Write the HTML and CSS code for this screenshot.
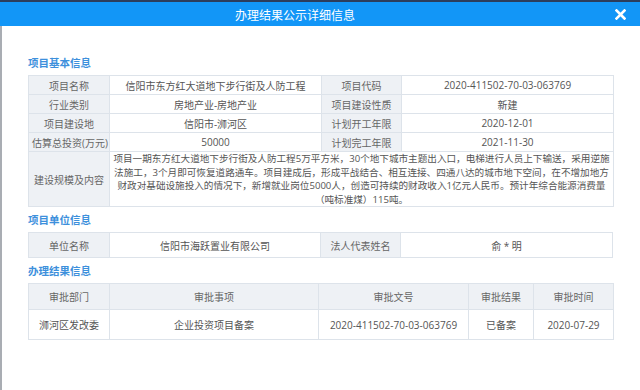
FILE: index.html
```html
<html>
<head>
    <meta charset="utf-8">
    <link rel="stylesheet" href="styles.css">
</head>

<body>

<div class="topstrip"></div>

<div class="dialog">
    <div class="titlebar">
        <span class="title">办理结果公示详细信息</span>
        <svg class="close" width="11" height="11" viewBox="0 0 11 11">
            <path d="M1.5 1.5 L9.5 9.5 M9.5 1.5 L1.5 9.5" stroke="#fff" stroke-width="2.6" stroke-linecap="square"/>
        </svg>
    </div>

    <div class="body">
        <h3>项目基本信息</h3>
        <table class="info">
            <colgroup><col class="c1"><col class="c2"><col class="c3"><col class="c4"></colgroup>
            <tr><th>项目名称</th><td>信阳市东方红大道地下步行街及人防工程</td><th>项目代码</th><td>2020-411502-70-03-063769</td></tr>
            <tr><th>行业类别</th><td>房地产业-房地产业</td><th>项目建设性质</th><td>新建</td></tr>
            <tr><th>项目建设地</th><td>信阳市-浉河区</td><th>计划开工年限</th><td>2020-12-01</td></tr>
            <tr><th>估算总投资(万元)</th><td>50000</td><th>计划完工年限</th><td>2021-11-30</td></tr>
            <tr class="desc"><th>建设规模及内容</th><td colspan="3">项目一期东方红大道地下步行街及人防工程5万平方米，30个地下城市主题出入口，电梯进行人员上下输送，采用逆施<br>法施工，3个月即可恢复道路通车。项目建成后，形成平战结合、相互连接、四通八达的城市地下空间，在不增加地方<br>财政对基础设施投入的情况下，新增就业岗位5000人，创造可持续的财政收入1亿元人民币。预计年综合能源消费量<br>（吨标准煤）115吨。</td></tr>
        </table>

        <h3>项目单位信息</h3>
        <table class="info unit">
            <colgroup><col class="c1"><col class="c2u"><col class="c3"><col class="c4"></colgroup>
            <tr><th>单位名称</th><td>信阳市海跃置业有限公司</td><th>法人代表姓名</th><td>俞 * 明</td></tr>
        </table>

        <h3>办理结果信息</h3>
        <table class="info result">
            <colgroup><col class="c1"><col class="r2"><col class="r3"><col class="r4"><col class="r5"></colgroup>
            <tr><th>审批部门</th><th>审批事项</th><th>审批文号</th><th>审批结果</th><th>审批时间</th></tr>
            <tr><td>浉河区发改委</td><td>企业投资项目备案</td><td>2020-411502-70-03-063769</td><td>已备案</td><td>2020-07-29</td></tr>
        </table>
    </div>
</div>

</body>
</html>
```

FILE: styles.css
```css
body { margin: 0; background: #fff; font-family: "Open Sans", "Noto Sans CJK SC", sans-serif; }
.topstrip { height: 2px; background: #2c3d5c; }
.dialog { border-left: 2px solid #a9adb3; height: 388px; box-sizing: border-box; }
.titlebar { height: 24px; background: #1296f7; display: flex; align-items: center; justify-content: center; position: relative; padding-right: 50px; margin-left: -2px; }
.title { color: #fff; font-size: 12px; font-family: "Noto Sans CJK SC", sans-serif; }
.close { position: absolute; right: 14px; top: 7px; }
.body { padding: 24px 0 0 26px; }
h3 { margin: 0; font-size: 10.5px; line-height: 25px; height: 25px; color: #3d90dc; font-weight: bold; font-family: "Noto Sans CJK SC", sans-serif; }
.info { border-collapse: collapse; table-layout: fixed; width: 585px; font-size: 10px; color: #555; }
.info th, .info td { border: 1px solid #dde3ea; text-align: center; padding: 0 3px; height: 19px; font-weight: normal; white-space: nowrap; overflow: hidden; }
.info th { background: #eef1f5; color: #666; }
.c1 { width: 81px; }
.c2 { width: 212px; }
.c2u { width: 211px; }
.c3 { width: 80px; }
.c4 { width: 212px; }
.desc td { white-space: normal; font-size: 9.6px; line-height: 13.6px; height: 55px; padding: 0; }
.unit th, .unit td { height: 25px; }
.r2 { width: 209px; }
.r3 { width: 150px; }
.r4 { width: 65px; }
.r5 { width: 80px; }
.result tr:first-child th { height: 26px; }
.result td { height: 30px; }
```
